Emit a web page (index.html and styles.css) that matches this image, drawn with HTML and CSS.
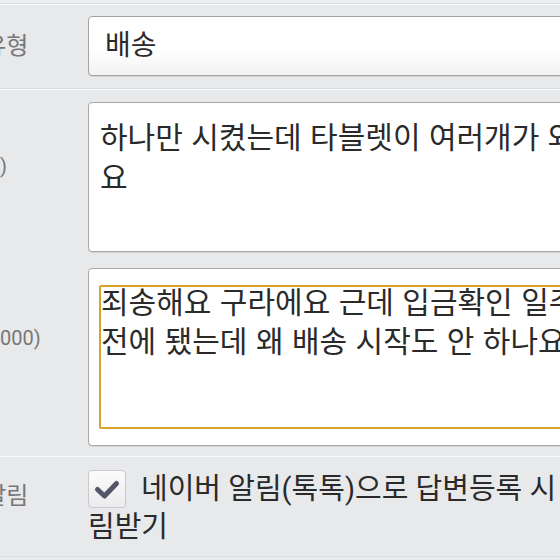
FILE: index.html
```html
<!DOCTYPE html>
<html lang="ko">
<head>
<meta charset="utf-8">
<title>문의하기</title>
<link rel="stylesheet" href="styles.css">
</head>
<body>
<div class="form">
  <div class="row row-prev"></div>
  <div class="row row-type">
    <div class="label">문의유형</div>
    <div class="input">배송</div>
  </div>
  <div class="row row-texts">
    <div class="label label-title">제목<br><span class="count">(0/100)</span></div>
    <div class="box box-title">
      <div class="text">하나만 시켰는데 타블렛이 여러개가 와<br>요</div>
    </div>
    <div class="label label-body">내용<br><span class="count">(100/2000)</span></div>
    <div class="box box-body">
      <div class="focus">
        <div class="text text-scrolled">죄송해요 구라에요 근데 입금확인 일주일<br>전에 됐는데 왜 배송 시작도 안 하나요?</div>
      </div>
    </div>
  </div>
  <div class="row row-alert">
    <div class="label label-alert">답변알림</div>
    <div class="check-text"><span class="checkbox"><svg viewBox="0 0 38 38" width="38" height="38"><polyline points="9.5,19.5 16.5,26 28.5,13.5" fill="none" stroke="#55556a" stroke-width="5" stroke-linecap="round" stroke-linejoin="round"/></svg></span>네이버 알림(톡톡)으로 답변등록 시 알<br>림받기</div>
  </div>
</div>
</body>
</html>
```

FILE: styles.css
```css
html, body {
  margin: 0;
  padding: 0;
}
body {
  background: #e8e9eb;
  font-family: Roboto, "Noto Sans CJK KR", sans-serif;
  color: #2a2a2a;
  overflow: hidden;
  width: 560px;
  height: 560px;
}
.form {
  margin-left: -60px;
  width: 1100px;
}
.row {
  display: grid;
  grid-template-columns: 148px 1fr;
  border-top: 1px solid #f8f8f9;
  border-bottom: 1px solid #dcdde0;
}
.row-prev {
  display: block;
  height: 3px;
  background: #ecedee;
  border-top: none;
}
.row-type {
  padding: 11px 0 12px;
  align-items: center;
}
.label {
  font-size: 24px;
  line-height: 30px;
  color: #777;
  white-space: nowrap;
}
.count {
  font-size: 20px;
}
.input {
  height: 58px;
  width: 600px;
  border: 1px solid #a3a3a3;
  border-radius: 4px;
  background: linear-gradient(#ffffff 55%, #f2f2f2);
  box-shadow: 0 1px 0 #d4d5d8;
  display: flex;
  align-items: center;
  padding-left: 16px;
  font-size: 28px;
  line-height: 40px;
  color: #2a2a2a;
}
.row-texts {
  padding: 12px 0 10px;
  row-gap: 16px;
  border-bottom: 1px solid #f7f7f8;
}
.label-title {
  align-self: start;
  margin-top: 18px;
}
.label-body {
  align-self: start;
  margin-top: 24px;
}
.box {
  width: 620px;
  border: 1px solid #a8a8a8;
  border-radius: 4px;
  background: #fff;
  box-shadow: 0 1px 0 #d4d5d8;
}
.box-title {
  height: 150px;
  padding: 15px 11px 0;
  box-sizing: border-box;
}
.box-body {
  height: 178px;
  box-sizing: border-box;
  padding: 16px 10px;
}
.text {
  font-size: 30px;
  line-height: 40px;
  word-spacing: 1px;
  color: #2a2a2a;
  white-space: nowrap;
}
.focus {
  height: 144px;
  box-sizing: border-box;
  border: 2px solid #daa22b;
  border-radius: 2px;
  overflow: hidden;
}
.text-scrolled {
  margin-top: -4px;
  line-height: 39px;
}
.row-alert {
  padding: 13px 0 10px;
  border-top: none;
}
.label-alert {
  align-self: start;
  margin-top: 11px;
}
.check-text {
  font-size: 29px;
  line-height: 38px;
  color: #2a2a2a;
  white-space: nowrap;
}
.checkbox {
  display: inline-block;
  vertical-align: top;
  width: 36px;
  height: 36px;
  border: 1px solid #c9c9cc;
  border-radius: 4px;
  background: linear-gradient(#fbfbfb, #ececee);
  margin-right: 15px;
}
.checkbox svg {
  display: block;
  margin: -1px;
}
```
